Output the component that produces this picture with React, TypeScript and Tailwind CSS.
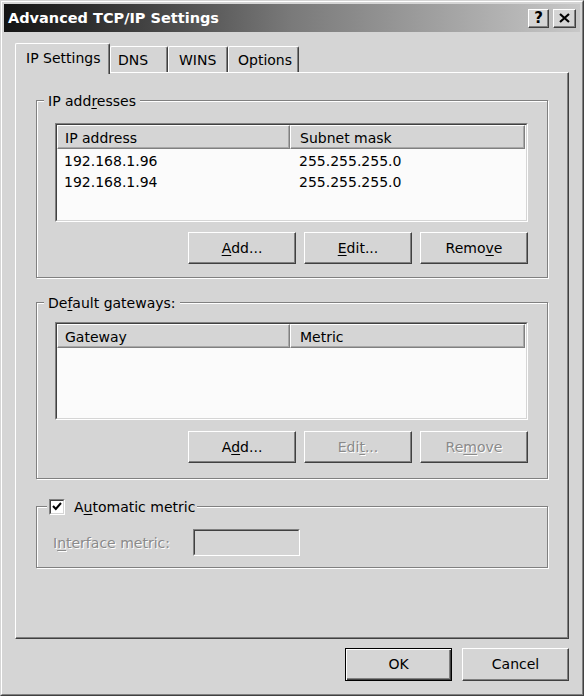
import type { ReactNode } from 'react'

const raised =
  'border border-t-white border-l-white border-r-[#404040] border-b-[#404040] shadow-[inset_-1px_-1px_0_#808080]'

const etched = 'border border-[#808080] shadow-[inset_1px_1px_0_#fff,1px_1px_0_#fff]'

const Key = ({ children }: { children: ReactNode }) => (
  <span className="underline decoration-1 underline-offset-[2px]">{children}</span>
)

const Button = ({
  children,
  disabled,
  isDefault,
  className = '',
}: {
  children: ReactNode
  disabled?: boolean
  isDefault?: boolean
  className?: string
}) => (
  <button
    disabled={disabled}
    className={`flex items-center justify-center bg-[#d5d5d5] text-[14px] ${
      isDefault
        ? 'border border-black shadow-[inset_1px_1px_0_#fff,inset_-1px_-1px_0_#404040,inset_-2px_-2px_0_#808080]'
        : raised
    } ${disabled ? 'text-[#8a8a8a] [text-shadow:1px_1px_0_#fff]' : 'text-black'} ${className}`}
  >
    {children}
  </button>
)

type Column = { label: string; className: string; pad: string }

const ListView = ({ columns, rows, height }: { columns: Column[]; rows: string[][]; height: string }) => (
  <div className={`${height} border border-t-[#808080] border-l-[#808080] border-r-white border-b-white`}>
    <div className="h-full flex flex-col bg-[#fbfbfb] border border-t-[#404040] border-l-[#404040] border-r-[#d5d5d5] border-b-[#d5d5d5]">
      <div className="flex h-[24px] shrink-0">
        {columns.map((c) => (
          <div
            key={c.label}
            className={`${c.className} ${c.pad} pt-[2px] flex items-center bg-[#d5d5d5] border border-t-white border-l-white border-r-[#808080] border-b-[#808080] shadow-[inset_-1px_-1px_0_#a8a8a8]`}
          >
            {c.label}
          </div>
        ))}
      </div>
      {rows.map((r) => (
        <div key={r[0]} className="flex h-[21px] pt-[3px] items-center">
          {r.map((cell, i) => (
            <div key={i} className={`${columns[i].className} ${columns[i].pad}`}>
              {cell}
            </div>
          ))}
        </div>
      ))}
    </div>
  </div>
)

const ipColumns: Column[] = [
  { label: 'IP address', className: 'w-[233px]', pad: 'pl-[7px]' },
  { label: 'Subnet mask', className: 'w-[235px]', pad: 'pl-[9px]' },
]

const gwColumns: Column[] = [
  { label: 'Gateway', className: 'w-[233px]', pad: 'pl-[7px]' },
  { label: 'Metric', className: 'w-[235px]', pad: 'pl-[9px]' },
]

const addresses = [
  ['192.168.1.96', '255.255.255.0'],
  ['192.168.1.94', '255.255.255.0'],
]

const tabs = [
  { label: 'DNS', className: 'w-[58px] pl-[7px]' },
  { label: 'WINS', className: 'w-[60px] pl-[10px]' },
  { label: 'Options', className: 'w-[71px] pl-[9px]' },
]

export default function App() {
  return (
    <div className="w-[584px] h-[696px] bg-[#d5d5d5] text-[14px] text-black font-['DejaVu_Sans','Liberation_Sans',sans-serif] border border-t-[#d5d5d5] border-l-[#d5d5d5] border-r-[#404040] border-b-[#404040]">
      <div className="h-full flex flex-col p-[2px] pb-[13px] border border-t-white border-l-white border-r-[#808080] border-b-[#808080]">
        {/* title bar */}
        <div className="h-[28px] shrink-0 flex items-center bg-gradient-to-r from-[#141414] via-[#7a7a7a] to-[#c8c8c8] pl-[4px] pr-[4px]">
          <span className="flex-1 text-white font-bold text-[14.5px] leading-none pt-[1px]">Advanced TCP/IP Settings</span>
          <div className="flex gap-[4px]">
            <div className={`w-[21px] h-[19px] bg-[#d5d5d5] flex items-center justify-center font-bold text-[15px] leading-none ${raised}`}>
              ?
            </div>
            <div className={`w-[23px] h-[19px] bg-[#d5d5d5] flex items-center justify-center ${raised}`}>
              <svg width="11" height="10" viewBox="0 0 11 10">
                <path d="M1 1 L10 9 M10 1 L1 9" stroke="#000" strokeWidth="2.2" />
              </svg>
            </div>
          </div>
        </div>

        <div className="flex-1 flex flex-col mt-[11px] px-[11px]">
          {/* tabs */}
          <div className="flex items-end h-[29px] shrink-0">
            <div className="relative z-10 w-[95px] h-[31px] -mb-[2px] pl-[10px] pb-[2px] flex items-center bg-[#d5d5d5] rounded-t-[2px] border border-b-0 border-t-white border-l-white border-r-[#404040] shadow-[inset_-1px_0_0_#808080]">
              IP Settings
            </div>
            {tabs.map((t) => (
              <div
                key={t.label}
                className={`${t.className} h-[26px] pt-[2px] flex items-center bg-[#d5d5d5] rounded-t-[2px] border border-b-0 border-t-white border-l-white border-r-[#404040] shadow-[inset_-1px_0_0_#808080]`}
              >
                {t.label}
              </div>
            ))}
          </div>

          {/* panel */}
          <div className={`flex-1 flex flex-col px-[20px] pt-[17px] ${raised}`}>
            <fieldset className={`px-[7px] pb-[13px] ${etched}`}>
              <legend className="px-[4px] pt-[3px] leading-[17px] bg-[#d5d5d5]">
                IP add<Key>r</Key>esses
              </legend>
              <div className="pl-[11px] pr-[12px] pt-[13px]">
                <ListView columns={ipColumns} rows={addresses} height="h-[99px]" />
                <div className="flex justify-end gap-[8px] mt-[10px]">
                  <Button className="w-[108px] h-[32px]">
                    <Key>A</Key>dd...
                  </Button>
                  <Button className="w-[108px] h-[32px]">
                    <Key>E</Key>dit...
                  </Button>
                  <Button className="w-[108px] h-[32px]">
                    Remo<Key>v</Key>e
                  </Button>
                </div>
              </div>
            </fieldset>

            <fieldset className={`mt-[14px] px-[7px] pb-[15px] ${etched}`}>
              <legend className="px-[4px] pt-[3px] leading-[17px] bg-[#d5d5d5]">
                De<Key>f</Key>ault gateways:
              </legend>
              <div className="pl-[11px] pr-[12px] pt-[10px]">
                <ListView columns={gwColumns} rows={[]} height="h-[98px]" />
                <div className="flex justify-end gap-[8px] mt-[11px]">
                  <Button className="w-[108px] h-[32px]">
                    A<Key>d</Key>d...
                  </Button>
                  <Button disabled className="w-[108px] h-[32px]">
                    Edi<Key>t</Key>...
                  </Button>
                  <Button disabled className="w-[108px] h-[32px]">
                    Re<Key>m</Key>ove
                  </Button>
                </div>
              </div>
            </fieldset>

            <fieldset className={`mt-[18px] px-[7px] pb-[11px] ${etched}`}>
              <legend className="ml-[3px] px-[2px] leading-[17px] bg-[#d5d5d5] flex items-center gap-[9px]">
                <span className="w-[16px] h-[16px] border border-t-[#808080] border-l-[#808080] border-r-white border-b-white">
                  <span className="w-full h-full flex items-center justify-center bg-white border border-t-[#404040] border-l-[#404040] border-r-[#d5d5d5] border-b-[#d5d5d5]">
                    <svg width="10" height="9" viewBox="0 0 10 9">
                      <path d="M1 4 L3.8 7 L9 1" fill="none" stroke="#000" strokeWidth="2" />
                    </svg>
                  </span>
                </span>
                <span className="pt-[2px]">
                  A<Key>u</Key>tomatic metric
                </span>
              </legend>
              <div className="flex items-center pl-[9px] pt-[13px]">
                <span className="w-[140px] pt-[2px] text-[#8a8a8a] [text-shadow:1px_1px_0_#fff]">
                  I<Key>n</Key>terface metric:
                </span>
                <div className="w-[107px] h-[27px] border border-t-[#808080] border-l-[#808080] border-r-white border-b-white">
                  <div className="h-full border border-t-[#404040] border-l-[#404040] border-r-[#d5d5d5] border-b-[#d5d5d5]" />
                </div>
              </div>
            </fieldset>
          </div>

          {/* dialog buttons */}
          <div className="flex justify-end gap-[10px] mt-[9px] shrink-0">
            <Button isDefault className="w-[107px] h-[33px]">
              OK
            </Button>
            <Button className="w-[107px] h-[33px]">Cancel</Button>
          </div>
        </div>
      </div>
    </div>
  )
}
